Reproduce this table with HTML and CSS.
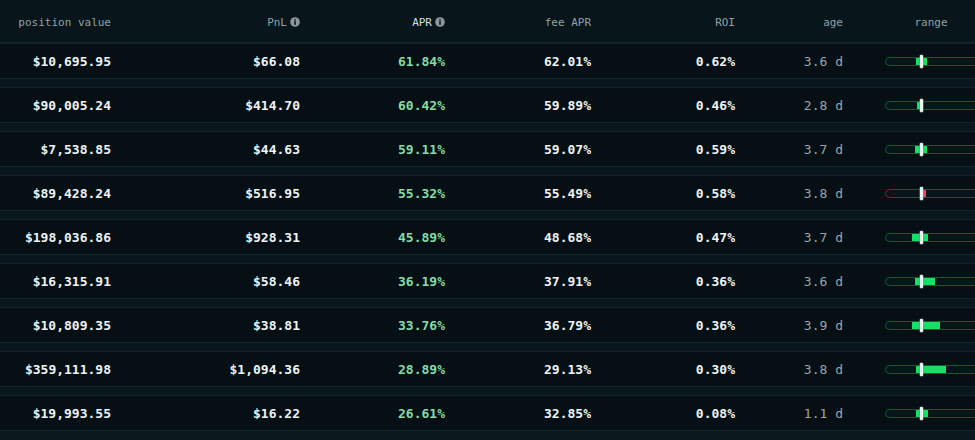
FILE: index.html
```html
<!DOCTYPE html>
<html>
<head>
<meta charset="utf-8">
<link rel="stylesheet" href="styles.css">
</head>
<body>
<div class="table">
  <div class="head">
    <div class="th">position value</div>
    <div class="th">PnL <svg class="info" viewBox="0 0 10 10"><circle cx="5" cy="5" r="4.8" fill="#8c989c"/><rect x="4.2" y="4.2" width="1.6" height="3.6" fill="#0a161b"/><rect x="4.2" y="2.2" width="1.6" height="1.4" fill="#0a161b"/></svg></div>
    <div class="th sorted">APR <svg class="info" viewBox="0 0 10 10"><circle cx="5" cy="5" r="4.8" fill="#8c989c"/><rect x="4.2" y="4.2" width="1.6" height="3.6" fill="#0a161b"/><rect x="4.2" y="2.2" width="1.6" height="1.4" fill="#0a161b"/></svg></div>
    <div class="th">fee APR</div>
    <div class="th">ROI</div>
    <div class="th">age</div>
    <div class="th center">range</div>
  </div>

  <div class="row">
    <div class="td">$10,695.95</div><div class="td">$66.08</div><div class="td apr">61.84%</div><div class="td">62.01%</div><div class="td">0.62%</div><div class="td age">3.6 d</div>
    <div class="rng"><div class="bar"><span class="seg" style="left:30px;width:11px"></span><span class="mark"></span></div></div>
  </div>
  <div class="row">
    <div class="td">$90,005.24</div><div class="td">$414.70</div><div class="td apr">60.42%</div><div class="td">59.89%</div><div class="td">0.46%</div><div class="td age">2.8 d</div>
    <div class="rng"><div class="bar"><span class="seg" style="left:31px;width:4px"></span><span class="mark"></span></div></div>
  </div>
  <div class="row">
    <div class="td">$7,538.85</div><div class="td">$44.63</div><div class="td apr">59.11%</div><div class="td">59.07%</div><div class="td">0.59%</div><div class="td age">3.7 d</div>
    <div class="rng"><div class="bar"><span class="seg" style="left:29px;width:12px"></span><span class="mark"></span></div></div>
  </div>
  <div class="row">
    <div class="td">$89,428.24</div><div class="td">$516.95</div><div class="td apr">55.32%</div><div class="td">55.49%</div><div class="td">0.58%</div><div class="td age">3.8 d</div>
    <div class="rng"><div class="bar out"><span class="seg" style="left:36px;width:4px"></span><span class="mark"></span></div></div>
  </div>
  <div class="row">
    <div class="td">$198,036.86</div><div class="td">$928.31</div><div class="td apr">45.89%</div><div class="td">48.68%</div><div class="td">0.47%</div><div class="td age">3.7 d</div>
    <div class="rng"><div class="bar"><span class="seg" style="left:26px;width:16px"></span><span class="mark"></span></div></div>
  </div>
  <div class="row">
    <div class="td">$16,315.91</div><div class="td">$58.46</div><div class="td apr">36.19%</div><div class="td">37.91%</div><div class="td">0.36%</div><div class="td age">3.6 d</div>
    <div class="rng"><div class="bar"><span class="seg" style="left:29px;width:20px"></span><span class="mark"></span></div></div>
  </div>
  <div class="row">
    <div class="td">$10,809.35</div><div class="td">$38.81</div><div class="td apr">33.76%</div><div class="td">36.79%</div><div class="td">0.36%</div><div class="td age">3.9 d</div>
    <div class="rng"><div class="bar"><span class="seg" style="left:26px;width:28px"></span><span class="mark"></span></div></div>
  </div>
  <div class="row">
    <div class="td">$359,111.98</div><div class="td">$1,094.36</div><div class="td apr">28.89%</div><div class="td">29.13%</div><div class="td">0.30%</div><div class="td age">3.8 d</div>
    <div class="rng"><div class="bar"><span class="seg" style="left:30px;width:30px"></span><span class="mark"></span></div></div>
  </div>
  <div class="row">
    <div class="td">$19,993.55</div><div class="td">$16.22</div><div class="td apr">26.61%</div><div class="td">32.85%</div><div class="td">0.08%</div><div class="td age">1.1 d</div>
    <div class="rng"><div class="bar"><span class="seg" style="left:30px;width:12px"></span><span class="mark"></span></div></div>
  </div>
</div>
</body>
</html>
```

FILE: styles.css
```css
html, body {
  margin: 0;
  padding: 0;
  background: #0a181d;
  overflow: hidden;
  width: 975px;
  height: 440px;
}

.table {
  width: 1020px;
  font-family: "DejaVu Sans Mono", "Liberation Mono", monospace;
  background: #0a181d;
}

.head, .row {
  display: grid;
  grid-template-columns: 111px 189px 145px 146px 144px 108px 176px;
  align-items: center;
}

.head {
  height: 42px;
  background: #08151a;
  border-bottom: 1px solid #13252b;
}

.th {
  font-size: 11px;
  color: #8fa2a6;
  text-align: right;
  display: flex;
  justify-content: flex-end;
  align-items: center;
  gap: 3px;
  padding-top: 2px;
}

.th.sorted {
  color: #d2dde2;
}

.th.center {
  justify-content: center;
}

.info {
  width: 10px;
  height: 10px;
}

.row {
  height: 34px;
  background: #050f14;
  border-top: 1px solid #11222a;
  border-bottom: 1px solid #11222a;
  margin-bottom: 8px;
}

.row:first-of-type {
  border-top: none;
  height: 35px;
}

.td {
  font-size: 13px;
  font-weight: bold;
  color: #eef3f5;
  text-align: right;
}

.td.apr {
  color: #84dca6;
}

.td.age {
  font-weight: normal;
  color: #9aa6a9;
}

.rng {
  padding-left: 42px;
  display: flex;
  align-items: center;
}

.bar {
  position: relative;
  width: 100px;
  height: 7px;
  border: 1px solid #115a32;
  border-radius: 5px;
  background: #071419;
}

.bar.out {
  border-color: #8e1839;
}

.seg {
  position: absolute;
  top: 0;
  height: 7px;
  background: #16e066;
}

.bar.out .seg {
  background: #f0466e;
}

.mark {
  position: absolute;
  left: 34px;
  top: -3px;
  width: 3px;
  height: 13px;
  background: #eef2f3;
  box-shadow: 0 0 0 0.5px #7d878a;
  border-radius: 1px;
}
```
